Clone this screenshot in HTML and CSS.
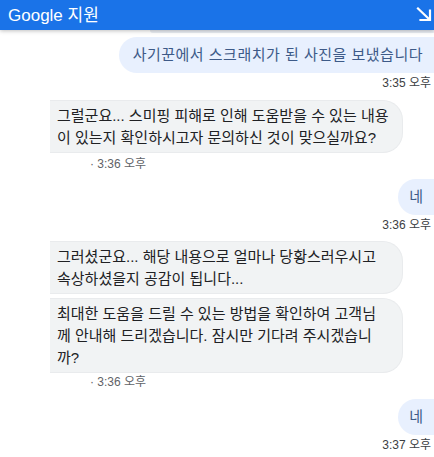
FILE: index.html
```html
<!DOCTYPE html>
<html lang="ko">
<head>
<meta charset="utf-8">
<link rel="stylesheet" href="styles.css">
</head>
<body>
<div class="app">
  <header class="topbar">
    <span class="title">Google 지원</span>
    <svg class="minimize" width="16" height="14" viewBox="0 0 16 14" aria-hidden="true">
      <path d="M2 1.5 L13.5 12.5 M14 3.5 V13 H4.5" fill="none" stroke="#fff" stroke-width="2.2" stroke-linecap="square"/>
    </svg>
  </header>
  <div class="chat">
    <div class="peek"></div>

    <div class="row user first">
      <div class="bubble user-bubble">사기꾼에서 스크래치가 된 사진을 보냈습니다</div>
    </div>
    <div class="time user-time">3:35 오후</div>

    <div class="row agent after-user">
      <div class="bubble agent-bubble">그럴군요... 스미핑 피해로 인해 도움받을 수 있는 내용<br>이 있는지 확인하시고자 문의하신 것이 맞으실까요?</div>
    </div>
    <div class="time agent-time">· 3:36 오후</div>

    <div class="row user">
      <div class="bubble user-bubble short">네</div>
    </div>
    <div class="time user-time">3:36 오후</div>

    <div class="row agent after-user2">
      <div class="bubble agent-bubble">그러셨군요... 해당 내용으로 얼마나 당황스러우시고<br>속상하셨을지 공감이 됩니다...</div>
    </div>
    <div class="row agent stacked">
      <div class="bubble agent-bubble">최대한 도움을 드릴 수 있는 방법을 확인하여 고객님<br>께 안내해 드리겠습니다. 잠시만 기다려 주시겠습니<br>까?</div>
    </div>
    <div class="time agent-time tight">· 3:36 오후</div>

    <div class="row user last">
      <div class="bubble user-bubble short">네</div>
    </div>
    <div class="time user-time">3:37 오후</div>
  </div>
</div>
</body>
</html>
```

FILE: styles.css
```css
html, body {
  margin: 0;
  padding: 0;
  background: #ffffff;
  overflow: hidden;
}

body {
  font-family: "Liberation Sans", "Noto Sans CJK KR", sans-serif;
  width: 434px;
  height: 457px;
}

.app {
  display: flex;
  flex-direction: column;
  width: 434px;
  height: 457px;
}

.topbar {
  position: relative;
  z-index: 2;
  height: 30px;
  flex: none;
  background: #1a73e8;
  display: flex;
  align-items: center;
  justify-content: space-between;
  padding: 0 2px 0 8px;
  box-shadow: 0 1px 4px rgba(0, 0, 0, 0.25);
}

.title {
  color: #ffffff;
  font-size: 17px;
  line-height: 30px;
  padding-top: 1px;
}

.minimize {
  display: block;
  margin-top: -3px;
}

.chat {
  display: flex;
  flex-direction: column;
}

.peek {
  height: 3px;
  margin-left: 150px;
  background: #e9edf3;
  border-radius: 0 0 4px 18px;
}

.row {
  display: flex;
}

.row.user {
  justify-content: flex-end;
  margin-top: 8px;
}

.row.user.first {
  margin-top: 4px;
}

.row.user.last {
  margin-top: 10px;
}

.row.agent {
  padding-left: 50px;
  margin-top: 10px;
}

.row.agent.after-user2 {
  margin-top: 9px;
}

.row.agent.stacked {
  margin-top: 4px;
}

.bubble {
  font-size: 15px;
  line-height: 22px;
  box-sizing: border-box;
}

.agent-bubble {
  width: 353px;
  background: #f1f3f4;
  color: #202124;
  padding: 4px 10px 3px 7px;
  border-radius: 0 20px 20px 0;
  border: 1px solid #e9ebed;
  border-left: none;
}

.user-bubble {
  background: #e8f0fe;
  color: #3d5a88;
  padding: 7px 11px 7px 14px;
  border-radius: 18px 0 0 18px;
  letter-spacing: 0.5px;
}

.user-bubble.short {
  padding: 7px 11px 7px 11px;
  letter-spacing: 0;
}

.time {
  font-size: 12px;
  line-height: 14px;
  color: #3c4043;
}

.user-time {
  text-align: right;
  padding-right: 3px;
  margin-top: 3px;
}

.agent-time {
  padding-left: 90px;
  color: #5f6368;
  margin-top: 4px;
}

.agent-time.tight {
  margin-top: 2px;
}
```
